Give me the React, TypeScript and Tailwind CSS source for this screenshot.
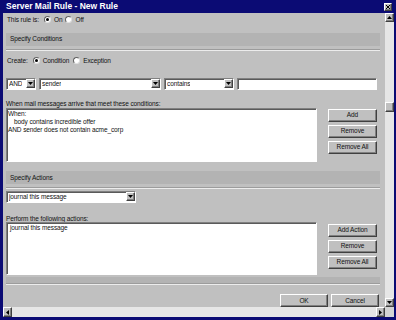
import React from "react";

const raised =
  "border border-t-white border-l-white border-b-[#404040] border-r-[#404040] shadow-[inset_-1px_-1px_#808080] bg-[#c0c0c0]";
const sunken =
  "border border-t-[#808080] border-l-[#808080] border-b-white border-r-white shadow-[inset_1px_1px_#5a5a5a] bg-white";

const Arrow: React.FC<{ dir: "up" | "down" | "left" | "right" }> = ({ dir }) => {
  const pts = {
    down: "0,0 5,0 2.5,3",
    up: "0,3 5,3 2.5,0",
    left: "3,0 3,5 0,2.5",
    right: "0,0 0,5 3,2.5",
  }[dir];
  const w = dir === "up" || dir === "down" ? 5 : 3;
  const h = dir === "up" || dir === "down" ? 3 : 5;
  return (
    <svg width={w} height={h} viewBox={`0 0 ${w} ${h}`}>
      <polygon points={pts} fill="#000" />
    </svg>
  );
};

const Radio: React.FC<{ on?: boolean; label: string }> = ({ on, label }) => (
  <div className="flex items-center gap-[3px]">
    <div className="w-[7px] h-[7px] rounded-full border border-t-[#606060] border-l-[#606060] border-b-[#e0e0e0] border-r-[#e0e0e0] bg-white flex items-center justify-center">
      {on && <div className="w-[3px] h-[3px] rounded-full bg-black" />}
    </div>
    <span>{label}</span>
  </div>
);

const Combo: React.FC<{ text: string; w: string }> = ({ text, w }) => (
  <div className={`${sunken} ${w} h-full flex items-center justify-between pl-[2px]`}>
    <span className="truncate">{text}</span>
    <div className={`${raised} w-[9px] h-[9px] flex items-center justify-center`}>
      <Arrow dir="down" />
    </div>
  </div>
);

const Btn: React.FC<{ label: string; w?: string }> = ({ label, w = "w-[49px]" }) => (
  <div className={`${raised} ${w} h-[13px] flex items-center justify-center`}>{label}</div>
);

const Header: React.FC<{ title: string }> = ({ title }) => (
  <>
    <div className="w-[374px] h-[13px] bg-[#b3b3b3] flex items-center pl-[4px]">{title}</div>
    <div className="w-[374px] mt-[3px] h-[2px] border-t border-t-[#9c9c9c] border-b border-b-[#ececec]" />
  </>
);

export default function App() {
  return (
    <div
      className="w-[396px] h-[320px] bg-[#0b0b74] flex flex-col overflow-hidden text-[#111] text-[6.5px] tracking-[-0.1px]"
      style={{ fontFamily: '"Liberation Sans", Arial, sans-serif' }}
    >
      {/* title bar */}
      <div className="h-[13px] flex items-center justify-between pl-[6px] pr-[4px]">
        <span className="text-white font-bold text-[8.5px] tracking-[0px]">Server Mail Rule - New Rule</span>
        <div className={`${raised} w-[8px] h-[8px] flex items-center justify-center`}>
          <svg width="4" height="4" viewBox="0 0 4 4">
            <path d="M0 0L4 4M4 0L0 4" stroke="#000" strokeWidth="1" />
          </svg>
        </div>
      </div>

      {/* body */}
      <div className="flex h-[294px] pl-[3px] pr-[2px]">
        <div className="flex-1 bg-[#c0c0c0] overflow-hidden pl-[3px] flex flex-col">
          <div className="mt-[1px] h-[12px] flex items-center gap-[3px] pl-[1px]">
            <span className="mr-[2px]">This rule is:</span>
            <Radio on label="On" />
            <Radio label="Off" />
          </div>

          <div className="mt-[7px]">
            <Header title="Specify Conditions" />
          </div>

          <div className="mt-[4px] h-[12px] flex items-center gap-[4px] pl-[1px]">
            <span className="mr-[1px]">Create:</span>
            <Radio on label="Condition" />
            <Radio label="Exception" />
          </div>

          <div className="mt-[11px] h-[12px] flex gap-[3px]">
            <Combo text="AND" w="w-[30px]" />
            <Combo text="sender" w="w-[122px]" />
            <Combo text="contains" w="w-[70px]" />
            <div className={`${sunken} w-[140px] h-full`} />
          </div>

          <div className="mt-[10px] h-[8px] leading-[8px]">
            When mail messages arrive that meet these conditions:
          </div>

          <div className="h-[55px] flex">
            <div className={`${sunken} w-[311px] h-full pl-[1px] pt-[1px] leading-[8px]`}>
              <div>When:</div>
              <div className="pl-[6px]">body contains incredible offer</div>
              <div>AND sender does not contain acme_corp</div>
            </div>
            <div className="ml-[11px] pt-[1px] flex flex-col gap-[3px]">
              <Btn label="Add" />
              <Btn label="Remove" />
              <Btn label="Remove All" />
            </div>
          </div>

          <div className="mt-[9px]">
            <Header title="Specify Actions" />
          </div>

          <div className="mt-[2px] h-[12px] flex">
            <Combo text="journal this message" w="w-[130px]" />
          </div>

          <div className="mt-[12px] h-[7px] leading-[7px]">Perform the following actions:</div>

          <div className="h-[54px] flex">
            <div className={`${sunken} w-[311px] h-full pl-[3px] pt-[1px] leading-[8px]`}>
              <div>journal this message</div>
            </div>
            <div className="ml-[11px] pt-[2px] flex flex-col gap-[3px]">
              <Btn label="Add Action" />
              <Btn label="Remove" />
              <Btn label="Remove All" />
            </div>
          </div>

          <div className="mt-[2px] w-[374px] h-[6px] bg-[#b3b3b3]" />
          <div className="w-[374px] h-[2px] border-t border-t-[#9c9c9c] border-b border-b-[#ececec]" />

          <div className="mt-[9px] h-[13px] flex justify-end gap-[3px] pr-[6px]">
            <Btn label="OK" w="w-[48px]" />
            <Btn label="Cancel" w="w-[48px]" />
          </div>
        </div>

        {/* vertical scrollbar */}
        <div className="w-[9px] bg-[#e6e6e6] flex flex-col">
          <div className={`${raised} h-[9px] flex items-center justify-center`}>
            <Arrow dir="up" />
          </div>
          <div className="h-[80px]" />
          <div className={`${raised} h-[10px]`} />
          <div className="flex-1" />
          <div className={`${raised} h-[9px] flex items-center justify-center`}>
            <Arrow dir="down" />
          </div>
        </div>
      </div>

      {/* horizontal scrollbar */}
      <div className="h-[10px] flex pl-[3px] pr-[2px]">
        <div className={`${raised} w-[9px] h-full flex items-center justify-center`}>
          <Arrow dir="left" />
        </div>
        <div className="flex-1 bg-[#e6e6e6]" />
        <div className={`${raised} w-[9px] h-full flex items-center justify-center`}>
          <Arrow dir="right" />
        </div>
        <div className="w-[9px] h-full bg-[#d4d4d4]" />
      </div>
    </div>
  );
}
